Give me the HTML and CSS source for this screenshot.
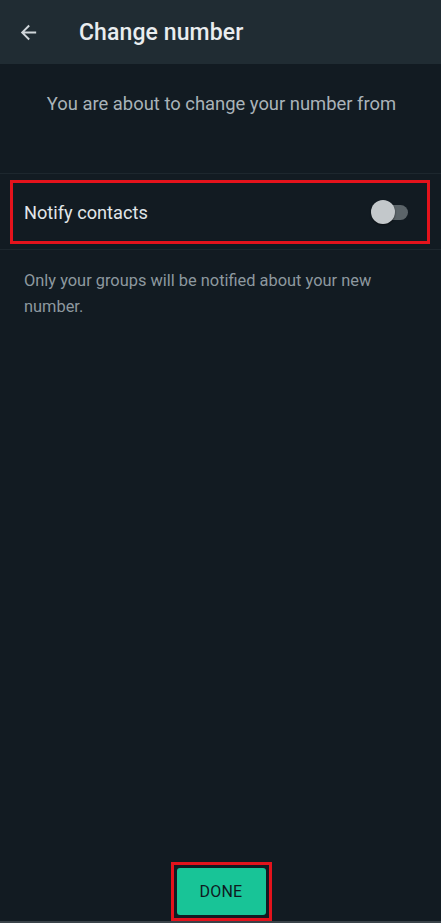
FILE: index.html
```html
<!DOCTYPE html>
<html>
<head>
<meta charset="utf-8">
<link rel="stylesheet" href="styles.css">
</head>
<body>
<div class="screen">
  <header class="appbar">
    <svg class="back" width="23" height="23" viewBox="0 0 24 24"><path d="M20 11H7.83l5.59-5.59L12 4l-8 8 8 8 1.41-1.41L7.83 13H20v-2z" fill="#d1d7db"/></svg>
    <h1 class="title">Change number</h1>
  </header>
  <main class="content">
    <p class="intro">You are about to change your number from</p>
    <div class="row-wrap">
      <div class="row highlight">
        <span class="row-label">Notify contacts</span>
        <span class="switch"><span class="track"></span><span class="thumb"></span></span>
      </div>
    </div>
    <p class="note">Only your groups will be notified about your new number.</p>
  </main>
  <footer class="footer">
    <div class="btn-outline"><button class="done">DONE</button></div>
  </footer>
</div>
</body>
</html>
```
FILE: styles.css
```css
* { box-sizing: border-box; }
html, body { margin: 0; padding: 0; }
body {
  background: #121b22;
  font-family: Roboto, "Noto Sans", sans-serif;
  width: 441px;
  height: 923px;
  overflow: hidden;
}
.screen {
  display: flex;
  flex-direction: column;
  height: 923px;
  border-bottom: 2px solid #3a4349;
}
.appbar {
  height: 64px;
  background: #202c33;
  display: flex;
  align-items: center;
  padding-left: 17px;
  flex-shrink: 0;
}
.back { display: block; margin-top: 1px; }
.title {
  margin: 0 0 0 39px;
  font-size: 23px;
  font-weight: 500;
  color: #e9edef;
  letter-spacing: 0.1px;
  margin-top: 1px;
}
.content { flex: 1; }
.intro {
  margin: 28px 0 0;
  text-align: center;
  font-size: 18.4px;
  color: #a9b3b9;
  line-height: 24px;
  padding-left: 2px;
}
.row-wrap {
  margin-top: 57px;
  border-top: 1px solid #1d272e;
  border-bottom: 1px solid #1d272e;
  padding: 6px 0 5px;
}
.row {
  margin: 0 11px 0 10px;
  height: 64px;
  border: 3px solid #e3131c;
  display: flex;
  align-items: center;
  justify-content: space-between;
  padding: 0 19px 0 11px;
}
.row-label {
  font-size: 18.2px;
  color: #e1e6e9;
  margin-top: 1px;
}
.switch {
  position: relative;
  width: 33px;
  height: 24px;
  display: block;
}
.track {
  position: absolute;
  left: 4px;
  right: 0;
  top: 5px;
  height: 15px;
  border-radius: 8px;
  background: #5b6469;
}
.thumb {
  position: absolute;
  left: -4px;
  top: 0;
  width: 24px;
  height: 24px;
  border-radius: 50%;
  background: #c3c8cb;
  box-shadow: 0 1px 2px rgba(0,0,0,0.5);
}
.note {
  margin: 18px 40px 0 24px;
  font-size: 16.4px;
  line-height: 26px;
  color: #8d989f;
}
.footer {
  display: flex;
  justify-content: center;
}
.btn-outline {
  border: 3px solid #e3131c;
  padding: 3px;
  margin-left: 1px;
}
.done {
  display: block;
  width: 89px;
  height: 47px;
  border: none;
  border-radius: 3px;
  background: #18c497;
  color: #0f1a1f;
  font-family: Roboto, "Noto Sans", sans-serif;
  font-size: 16px;
  font-weight: 400;
  letter-spacing: 0.2px;
  padding: 0;
}
```
